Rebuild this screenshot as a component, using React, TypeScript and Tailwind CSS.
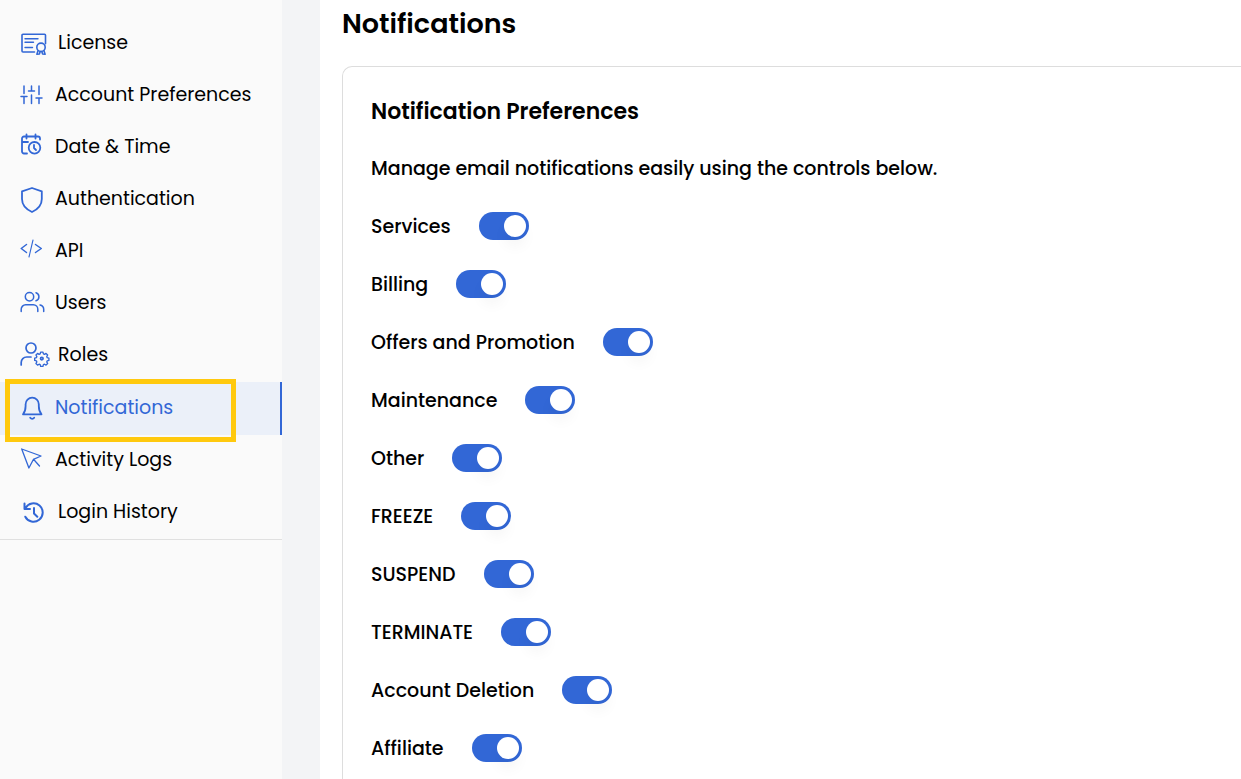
import type { ReactNode } from "react";

type NavItem = { label: string; icon: ReactNode; active?: boolean };

function Icon({ size, stroke = 1.5, children }: { size: "sm" | "lg"; stroke?: number; children: ReactNode }) {
  const width = size === "lg" ? 26 : 23;
  return (
    <svg
      aria-hidden="true"
      width={width}
      height={28}
      viewBox={`0 1 ${width} 28`}
      fill="none"
      stroke="#3267d6"
      strokeWidth={stroke}
      strokeLinecap="round"
      strokeLinejoin="round"
      className="shrink-0 overflow-visible"
    >
      {children}
    </svg>
  );
}

const navItems: NavItem[] = [
  {
    label: "License",
    icon: (
      <Icon size="lg" stroke={1.6}>
        <path d="M14.500 23H3a1 1 0 0 1-1-1V6.200a1 1 0 0 1 1-1h21.500a1 1 0 0 1 1 1v8.500" />
        <path d="M5 9.700h13M5 13.200h8.500M5 18.500h7.500" strokeWidth="1.400" />
        <circle cx="21" cy="18.300" r="4.200" />
        <path d="M18 21.800 16.900 25.200M24 21.800l1.100 3.400M19.400 25l.8-2.500M22.600 25l-.8-2.500M16.900 25.200l2.500-.2M25.100 25.200l-2.500-.2" />
      </Icon>
    ),
  },
  {
    label: "Account Preferences",
    icon: (
      <Icon size="sm">
        <path d="M4 5v7.500M4 16v6.500M1 15.500h6M11.500 5v4.500M11.500 14v8.500M8.500 10h6M19 5v8.500M19 17.500v5M16 17h6" />
      </Icon>
    ),
  },
  {
    label: "Date & Time",
    icon: (
      <Icon size="sm" stroke={1.8}>
        <path d="M7 20.500H4a2 2 0 0 1-2-2V5.500a2 2 0 0 1 2-2h14a2 2 0 0 1 2 2v1M2 9h6M6.500 1.500v4M15.500 1.500v4" />
        <circle cx="14.500" cy="14.800" r="5.800" />
        <path d="M14 12v3l2 2" />
      </Icon>
    ),
  },
  {
    label: "Authentication",
    icon: (
      <Icon size="sm" stroke={1.8}>
        <path d="M12 3 21.800 6.300V14c0 5.500-3.800 10.200-9.800 13C6 24.200 2 19.500 2 14V6.300Z" />
      </Icon>
    ),
  },
  {
    label: "API",
    icon: (
      <Icon size="sm">
        <path d="M6.500 7.500 1.200 11.500l5.300 4M15.500 7.500l5.800 4-5.800 4" />
        <path d="M13 3 9 20" strokeWidth="1.100" />
      </Icon>
    ),
  },
  {
    label: "Users",
    icon: (
      <Icon size="sm">
        <circle cx="9.500" cy="7.700" r="4.200" />
        <path d="M1.200 22.500v-2.200a4.500 4.500 0 0 1 4.500-4.500h7.600a4.500 4.500 0 0 1 4.500 4.500v2.200M16 3.700a4.200 4.200 0 0 1 0 8M20 16a4.500 4.500 0 0 1 3.700 4.300v2.200" />
      </Icon>
    ),
  },
  {
    label: "Roles",
    icon: (
      <Icon size="lg" stroke={1.7}>
        <circle cx="11" cy="7" r="5" />
        <path d="M1.200 24v-2.500a5.500 5.500 0 0 1 5.500-5.500h4.300" />
        <path
          d="M-1.300-6.500h2.600l.5 1.900 1.200.5 1.700-1 1.800 1.800-1 1.700.5 1.200 1.900.5v2.600l-1.900.5-.5 1.200 1 1.700-1.800 1.800-1.700-1-1.200.5-.5 1.900h-2.600l-.5-1.900-1.200-.5-1.700 1-1.800-1.800 1-1.700-.5-1.200-1.900-.5v-2.600l1.900-.5.5-1.200-1-1.700 1.800-1.800 1.700 1 1.200-.5Z"
          transform="translate(21.800 17) scale(.9)"
          strokeWidth="1.500"
        />
        <circle cx="21.800" cy="17.600" r="1.300" />
      </Icon>
    ),
  },
  {
    label: "Notifications",
    active: true,
    icon: (
      <Icon size="sm" stroke={1.8}>
        <path d="M3 20.300h18.500c-2-2.300-2.700-4.500-2.700-8.300v-1.800a6.600 6.600 0 0 0-13.200 0V12c0 3.800-.6 6-2.600 8.300Z" />
        <path d="M10.200 23.800c1 1.300 3 1.300 4 0" />
      </Icon>
    ),
  },
  {
    label: "Activity Logs",
    icon: (
      <Icon size="sm" stroke={1.3}>
        <path d="m1.700 3 19.300 7-7.500 3.300 6 6.700M1.700 3l7.200 19 4.600-8.700" />
      </Icon>
    ),
  },
  {
    label: "Login History",
    icon: (
      <Icon size="lg" stroke={2}>
        <path d="M5.500 10a9.200 9.200 0 1 1-.2 8.700M4.500 5.500V11H10" />
        <path d="M14 10v5.500l3.300 3.300" />
      </Icon>
    ),
  },
];

const preferences = [
  "Services",
  "Billing",
  "Offers and Promotion",
  "Maintenance",
  "Other",
  "FREEZE",
  "SUSPEND",
  "TERMINATE",
  "Account Deletion",
  "Affiliate",
];

function NavLink({ item }: { item: NavItem }) {
  return (
    <li className="relative">
      <a
        href="#"
        aria-current={item.active ? "page" : undefined}
        className={
          item.active
            ? "flex h-[53px] items-center gap-3 border-r-2 border-[#3267d6] bg-[#ebf0f9] pl-5 text-[#3267d6]"
            : "flex h-[52px] items-center gap-3 pl-5 text-black"
        }
      >
        {item.icon}
        <span className="whitespace-nowrap pb-0.5">{item.label}</span>
      </a>
      {item.active && (
        <span className="pointer-events-none absolute -bottom-[7px] -top-[3px] left-[5px] right-[46px] border-5 border-[#ffc90e]" />
      )}
    </li>
  );
}

function Preference({ label }: { label: string }) {
  const id = label.toLowerCase().replace(/ /g, "-");
  return (
    <div className="flex h-[58px] items-center gap-7">
      <label htmlFor={id}>{label}</label>
      <input
        id={id}
        type="checkbox"
        role="switch"
        defaultChecked
        className="mb-0.5 flex h-7 w-[50px] cursor-pointer appearance-none items-center rounded-full bg-gray-300 px-[3px] before:size-[22px] before:rounded-full before:bg-white before:shadow-[0_10px_14px_rgba(0,0,0,0.04)] checked:justify-end checked:bg-[#3267d6]"
      />
    </div>
  );
}

export default function App() {
  return (
    <div className="flex h-screen overflow-hidden bg-[#f3f4f6] font-['Poppins','Inter',sans-serif] text-black">
      <aside className="w-[282px] shrink-0 bg-[#fafafa]">
        <nav aria-label="Settings" className="border-b border-[#e0e0e0] pt-[18px] text-[19px] leading-7">
          <ul>
            {navItems.map((item) => (
              <NavLink key={item.label} item={item} />
            ))}
          </ul>
        </nav>
      </aside>
      <main className="ml-[38px] min-w-0 flex-1 overflow-hidden bg-white pl-[22px] pt-1">
        <h1 className="text-[27px] font-semibold leading-10">Notifications</h1>
        <section className="mt-[22px] rounded-tl-[10px] border-l border-t border-[#dddddd] pb-7 pl-7 pt-[15px] text-[19px] font-medium">
          <h2 className="flex h-[58px] items-center text-[22px] font-semibold">Notification Preferences</h2>
          <p className="flex h-[58px] items-center">Manage email notifications easily using the controls below.</p>
          {preferences.map((label) => (
            <Preference key={label} label={label} />
          ))}
        </section>
      </main>
    </div>
  );
}
